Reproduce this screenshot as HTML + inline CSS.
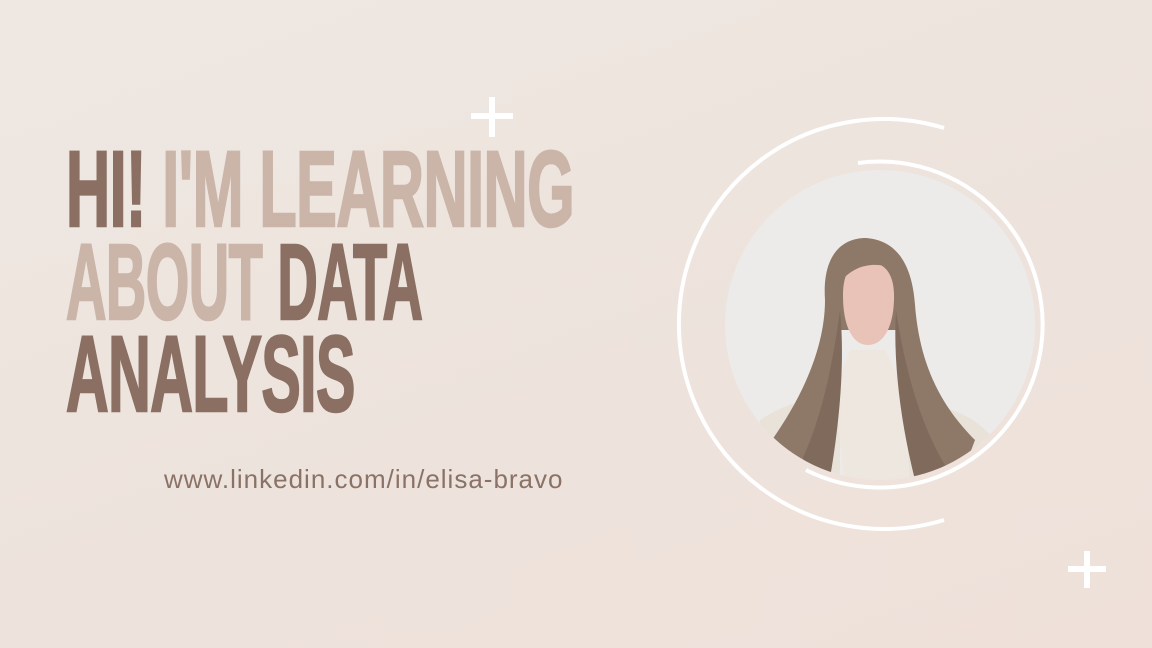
<!DOCTYPE html>
<html><head><meta charset="utf-8"><style>
html,body{margin:0;padding:0}
body{width:1152px;height:648px;overflow:hidden;position:relative;background:linear-gradient(160deg,#efe8e2 0%,#ede2dc 60%,#efe1da 100%);font-family:"Liberation Sans",sans-serif}
.h{position:absolute;left:66px;font-weight:bold;font-size:108px;line-height:108px;white-space:nowrap;transform:scaleX(0.566);transform-origin:0 0;letter-spacing:-1px;-webkit-text-stroke:2.5px currentColor}
.d{color:#8a6f62}.l{color:#cab5a8}
.link{position:absolute;left:164px;top:464px;font-size:26px;color:#8a7366;letter-spacing:1px;white-space:nowrap}
</style></head><body>
<div class="h" style="top:135px"><span class="d">HI!</span> <span class="l">I'M LEARNING</span></div>
<div class="h" style="top:228px;transform:scaleX(0.518)"><span class="l">ABOUT</span> <span class="d">DATA</span></div>
<div class="h" style="top:320px;transform:scaleX(0.547)"><span class="d">ANALYSIS</span></div>
<div class="link">www.linkedin.com/in/elisa-bravo</div>
<svg width="1152" height="648" style="position:absolute;left:0;top:0">
<g stroke="#fff" stroke-width="6" fill="none">
<path d="M471 116h42M492 97v40"/>
<path d="M1068 569h38M1087 551v37"/>
</g>
<defs><clipPath id="c"><circle cx="880" cy="325" r="155"/></clipPath></defs>
<g clip-path="url(#c)">
<rect x="720" y="165" width="320" height="320" fill="#ecebea"/>
<path d="M760 420 C790 400 820 395 840 400 L840 490 L760 490Z" fill="#e9e2d9"/>
<path d="M905 400 C940 405 970 410 995 440 L995 490 L905 490Z" fill="#e9e2d9"/>
<path d="M850 350 L885 350 L905 390 L910 490 L845 490 L835 390Z" fill="#eee7df"/>
<path d="M825 300 C822 255 842 238 866 238 C895 240 912 262 915 305 C920 370 945 410 975 440 L960 480 C925 470 905 420 896 330 L838 330 C830 400 820 450 790 470 L772 440 C800 400 825 350 825 300Z" fill="#8e7868"/>
<path d="M843 296 C843 270 852 262 868 262 C885 262 895 274 894 300 C893 330 882 345 868 345 C852 345 843 325 843 296Z" fill="#e9c3b7"/>
<path d="M842 262 C855 252 880 252 896 270 C880 262 858 262 842 280Z" fill="#8e7868"/>
<path d="M896 310 C905 370 920 425 948 470 L915 480 C900 420 893 360 896 310Z" fill="#806a5b"/>
<path d="M840 310 C832 370 820 425 798 468 L830 478 C840 420 845 360 840 310Z" fill="#806a5b"/>
</g>
<g stroke="#fff" stroke-width="4" fill="none" stroke-linecap="butt">
<path d="M944 128 A205 205 0 1 0 944 520"/>
<path d="M858 163 A163 163 0 1 1 806 470"/>
</g>
</svg>
</body></html>
